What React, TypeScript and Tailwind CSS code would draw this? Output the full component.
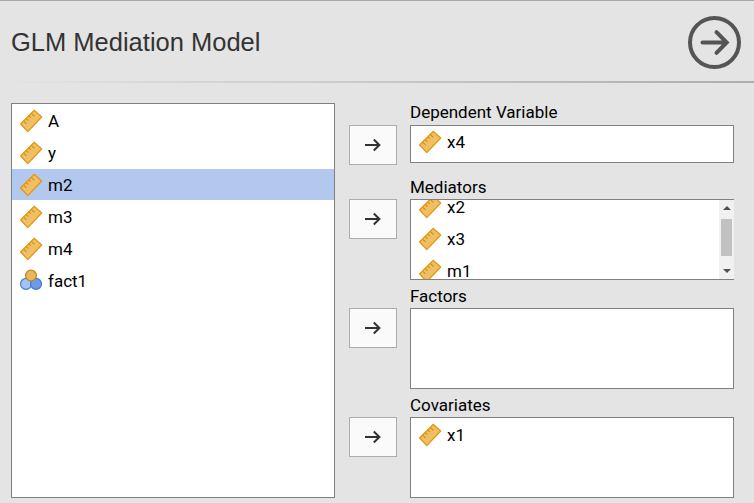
import React from "react";

type Kind = "ruler" | "nominal";
type Item = { name: string; kind?: Kind; selected?: boolean };

const variables: Item[] = [
  { name: "A" },
  { name: "y" },
  { name: "m2", selected: true },
  { name: "m3" },
  { name: "m4" },
  { name: "fact1", kind: "nominal" },
];

function RulerIcon() {
  return (
    <svg width="24" height="24" viewBox="0 0 24 24" className="mt-px shrink-0">
      <path d="M1.6 15 15.1 1.3 22.7 8 8.8 22.6Z" fill="#f0be63" stroke="#e0960f" strokeWidth="1.2" strokeLinejoin="round" />
      <path d="M4.9 12.3l2.6 2.5M7.4 9.7l1.9 1.8M9.9 7.1l1.9 1.8M12.4 4.5l3 2.9" stroke="#d68c10" strokeWidth="1.1" fill="none" />
    </svg>
  );
}

function NominalIcon() {
  return (
    <svg width="24" height="24" viewBox="0 0 24 24" className="mt-px shrink-0">
      <circle cx="7" cy="14.9" r="5.5" fill="#a5c2f0" stroke="#4580dd" strokeWidth="1.2" />
      <circle cx="17" cy="14.9" r="5.5" fill="#6d9be6" stroke="#3d7ae0" strokeWidth="1.2" />
      <circle cx="12" cy="6.6" r="5.4" fill="#e8b65c" stroke="#bf850f" strokeWidth="1.2" />
    </svg>
  );
}

function Row({ item }: { item: Item }) {
  return (
    <div className={`mb-px flex h-[31px] shrink-0 items-center gap-[5px] pl-[7px] ${item.selected ? "bg-[#b3c8ef]" : ""}`}>
      {item.kind === "nominal" ? <NominalIcon /> : <RulerIcon />}
      <span className="pt-[2px] text-[17px] leading-[29px]">{item.name}</span>
    </div>
  );
}

function MoveButton() {
  return (
    <button className="flex h-10 w-12 shrink-0 items-center justify-center border border-[#acacac] bg-[#fafafa]">
      <svg width="18" height="16" viewBox="0 0 18 16" fill="none" stroke="#333" strokeWidth="2">
        <path d="M1 8h14.5M9.8 2.5 15.4 8l-5.6 5.5" />
      </svg>
    </button>
  );
}

function Scrollbar() {
  return (
    <div className="flex w-[15px] shrink-0 flex-col items-center justify-between bg-[#f1f1f1] py-[6px]">
      <svg width="8" height="4" viewBox="0 0 8 4"><path d="M4 0 8 4H0Z" fill="#505050" /></svg>
      <div className="mb-[5px] h-[37px] w-[11px] bg-[#c1c1c1]" />
      <svg width="8" height="4" viewBox="0 0 8 4"><path d="M0 0h8L4 4Z" fill="#505050" /></svg>
    </div>
  );
}

type TargetProps = { label: string; items: string[]; className: string; scroll?: boolean; single?: boolean };

function Target({ label, items, className, scroll, single }: TargetProps) {
  return (
    <section className="flex gap-[13px]">
      <div className="pt-[25px]">
        <MoveButton />
      </div>
      <div className="w-[324px]">
        <h2 className={`h-[25px] text-[17px] ${single ? "leading-[25px]" : "pt-[2px] leading-[23px]"}`}>{label}</h2>
        <div className={`flex overflow-hidden border border-[#808080] bg-white ${scroll ? "border-r-0" : ""} ${className}`}>
          <div className={`flex grow flex-col ${scroll ? "-mt-[9px]" : single ? "" : "pt-px"}`}>
            {items.map((name) => (
              <Row key={name} item={{ name }} />
            ))}
          </div>
          {scroll && <Scrollbar />}
        </div>
      </div>
    </section>
  );
}

export default function App() {
  return (
    <main className="h-[503px] w-[754px] overflow-hidden border-t border-[#a8a8a8] bg-[#e4e4e4] font-['Roboto',sans-serif] text-black">
      <header className="flex h-20 items-center justify-between pt-[3px] pr-[13px] pl-[11px]">
        <h1 className="mb-[2px] font-['Liberation_Sans',sans-serif] text-[25.5px] leading-8 text-[#333]">GLM Mediation Model</h1>
        <svg width="53" height="53" viewBox="0 0 53 53" fill="none" stroke="#555" strokeWidth="4">
          <circle cx="26.5" cy="26.5" r="24.5" />
          <path d="M14.5 26.5H38M28.5 16.2 38.7 26.5 28.5 36.8" strokeLinecap="round" />
        </svg>
      </header>
      <div className="h-[2px] bg-linear-to-r from-[#e4e4e4] to-[#adadad]" />
      <div className="flex gap-[14px] pt-5 pl-[11px]">
        <div className="h-[395px] w-[324px] border border-[#808080] bg-white pt-px">
          {variables.map((v) => (
            <Row key={v.name} item={v} />
          ))}
        </div>
        <div className="-mt-[3px] flex flex-col">
          <Target label="Dependent Variable" items={["x4"]} className="mb-[11px] h-[38px]" single />
          <Target label="Mediators" items={["x2", "x3", "m1"]} className="mb-[3px] h-[81px]" scroll />
          <Target label="Factors" items={[]} className="mb-[3px] h-[81px]" />
          <Target label="Covariates" items={["x1"]} className="h-[81px]" />
        </div>
      </div>
    </main>
  );
}
